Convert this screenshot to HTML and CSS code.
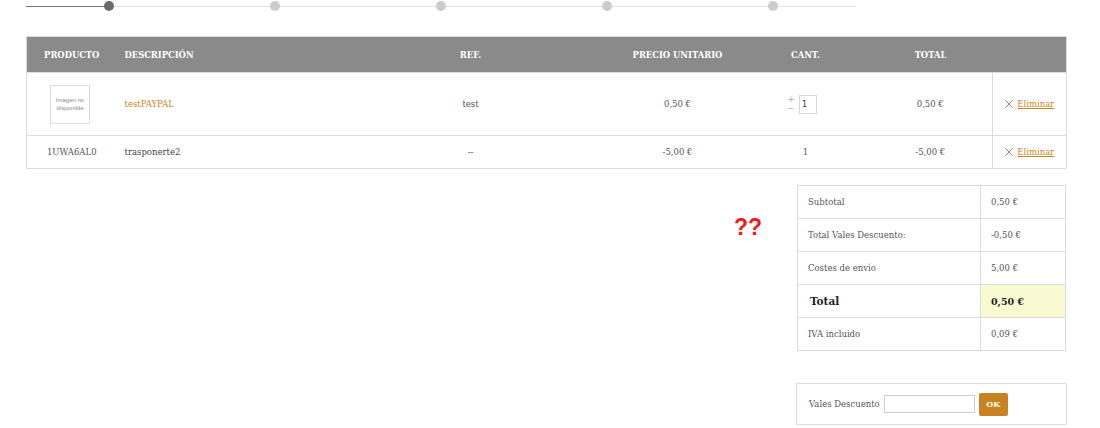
FILE: index.html
```html
<!DOCTYPE html>
<html lang="es">
<head>
  <meta charset="UTF-8">
  <title>Carrito</title>
  <link rel="stylesheet" href="styles.css">
</head>
<body>
  <div class="page">

    <div class="steps">
      <div class="step step-done"><span class="dot dot-active"></span></div>
      <div class="step"><span class="dot"></span></div>
      <div class="step"><span class="dot"></span></div>
      <div class="step"><span class="dot"></span></div>
      <div class="step"><span class="dot"></span></div>
    </div>

    <table class="cart">
      <colgroup>
        <col style="width:90px">
        <col style="width:212px">
        <col style="width:284px">
        <col style="width:130px">
        <col style="width:126px">
        <col style="width:124px">
        <col style="width:74px">
      </colgroup>
      <thead>
        <tr>
          <th>Producto</th>
          <th class="left">Descripción</th>
          <th>Ref.</th>
          <th>Precio unitario</th>
          <th>Cant.</th>
          <th>Total</th>
          <th></th>
        </tr>
      </thead>
      <tbody>
        <tr class="row-img">
          <td><div class="noimg">Imagen no disponible</div></td>
          <td class="left"><a class="prod-link" href="#">testPAYPAL</a></td>
          <td>test</td>
          <td>0,50 €</td>
          <td>
            <div class="qty">
              <div class="qty-btns"><span>+</span><span>−</span></div>
              <input class="qty-input" type="text" value="1">
            </div>
          </td>
          <td>0,50 €</td>
          <td class="del">
            <svg class="x" width="8" height="8" viewBox="0 0 8 8"><path d="M0.5 0.5L7.5 7.5M7.5 0.5L0.5 7.5" stroke="#8a8a8a" stroke-width="1" fill="none"/></svg>
            <a href="#">Eliminar</a>
          </td>
        </tr>
        <tr>
          <td>1UWA6AL0</td>
          <td class="left dark">trasponerte2</td>
          <td>--</td>
          <td>-5,00 €</td>
          <td>1</td>
          <td>-5,00 €</td>
          <td class="del">
            <svg class="x" width="8" height="8" viewBox="0 0 8 8"><path d="M0.5 0.5L7.5 7.5M7.5 0.5L0.5 7.5" stroke="#8a8a8a" stroke-width="1" fill="none"/></svg>
            <a href="#">Eliminar</a>
          </td>
        </tr>
      </tbody>
    </table>

    <div class="summary">
      <span class="note">??</span>
      <table class="totals">
        <tr><td>Subtotal</td><td>0,50 €</td></tr>
        <tr><td>Total Vales Descuento:</td><td>-0,50 €</td></tr>
        <tr><td>Costes de envío</td><td>5,00 €</td></tr>
        <tr class="grand"><td class="grand-label">Total</td><td class="grand-val">0,50 €</td></tr>
        <tr><td>IVA incluido</td><td>0,09 €</td></tr>
      </table>
    </div>

    <div class="coupon-row">
      <form class="coupon">
        <label for="vale">Vales Descuento</label>
        <input id="vale" class="coupon-input" type="text">
        <button class="btn-ok" type="button">OK</button>
      </form>
    </div>

  </div>
</body>
</html>
```

FILE: styles.css
```css
body {
  margin: 0;
  background: #fff;
  font-family: "DejaVu Serif", serif;
  font-size: 8.5px;
  color: #555;
}
.page {
  width: 1040px;
  padding-left: 26px;
}

/* steps */
.steps {
  display: flex;
  width: 830px;
  height: 12px;
  background: linear-gradient(#e2e2e2, #e2e2e2) 0 6px / 100% 1px no-repeat;
}
.step {
  flex: 0 0 166px;
  display: flex;
  align-items: center;
  justify-content: center;
}
.step-done {
  background: linear-gradient(#777, #777) 0 6px / 50% 1px no-repeat;
}
.dot {
  width: 10px;
  height: 10px;
  border-radius: 50%;
  background: #cbcbcb;
}
.dot-active {
  background: #6b6b6b;
}

/* cart table */
.cart {
  width: 1040px;
  margin-top: 24px;
  border-collapse: collapse;
  table-layout: fixed;
  border: 1px solid #dcdcdc;
}
.cart th {
  background: #8a8a8a;
  color: #fff;
  font-weight: bold;
  text-transform: uppercase;
  font-size: 8.4px;
  height: 35px;
  padding: 0;
  text-align: center;
}
.cart td {
  border-top: 1px solid #dcdcdc;
  height: 32px;
  padding: 0;
  text-align: center;
  color: #555;
}
.cart .left {
  text-align: left;
  padding-left: 8px;
}
.cart .row-img td {
  height: 62px;
}
.cart .dark {
  color: #444;
}
.cart .del {
  border-left: 1px solid #dcdcdc;
}
.noimg {
  width: 38px;
  height: 37px;
  margin-left: 23px;
  border: 1px solid #dcdcdc;
  display: flex;
  align-items: center;
  justify-content: center;
  font-family: "Liberation Sans", sans-serif;
  font-size: 6px;
  line-height: 8px;
  color: #888;
}
.prod-link {
  color: #c8861e;
  text-decoration: none;
}
.qty {
  display: flex;
  align-items: center;
  justify-content: center;
  gap: 5px;
  padding-right: 6px;
}
.qty-btns {
  display: flex;
  flex-direction: column;
  font-family: "Liberation Sans", sans-serif;
  font-size: 10px;
  line-height: 9px;
  color: #aaa;
}
.qty-input {
  width: 18px;
  height: 19px;
  box-sizing: border-box;
  border: 1px solid #d6d6d6;
  padding: 0 2px;
  font-family: "DejaVu Sans", sans-serif;
  font-size: 8px;
  color: #333;
}
.x {
  margin-right: 2px;
  vertical-align: -1px;
}
.del a {
  color: #c8861e;
}

/* totals */
.summary {
  display: flex;
  justify-content: flex-end;
  margin-top: 16px;
}
.note {
  font-family: "Liberation Sans", sans-serif;
  font-weight: bold;
  font-size: 23px;
  line-height: 23px;
  color: #ee1c1c;
  margin-top: 31px;
  margin-right: 35px;
}
.totals {
  width: 269px;
  border-collapse: collapse;
  table-layout: fixed;
}
.totals td {
  border: 1px solid #dcdcdc;
  height: 32px;
  padding: 0 0 0 10px;
  color: #555;
}
.totals td:first-child {
  width: 172px;
}
.totals .grand td {
  font-weight: bold;
  color: #222;
}
.totals .grand-label {
  font-size: 10.5px;
  padding-left: 12px;
}
.totals .grand-val {
  font-size: 9.5px;
  background: #fafad2;
}

/* coupon */
.coupon-row {
  display: flex;
  justify-content: flex-end;
  margin-top: 32px;
}
.coupon {
  width: 271px;
  height: 42px;
  box-sizing: border-box;
  border: 1px solid #dcdcdc;
  display: flex;
  align-items: center;
  padding-left: 12px;
  margin: 0 -1px 0 0;
}
.coupon label {
  color: #555;
}
.coupon-input {
  width: 91px;
  height: 18px;
  box-sizing: border-box;
  margin-left: 4px;
  border: 1px solid #ccc;
}
.btn-ok {
  width: 29px;
  height: 23px;
  margin-left: 4px;
  padding: 0;
  border: none;
  border-radius: 2px;
  background: #c8821f;
  color: #fff;
  font-family: "DejaVu Serif", serif;
  font-weight: bold;
  font-size: 8px;
}
```
